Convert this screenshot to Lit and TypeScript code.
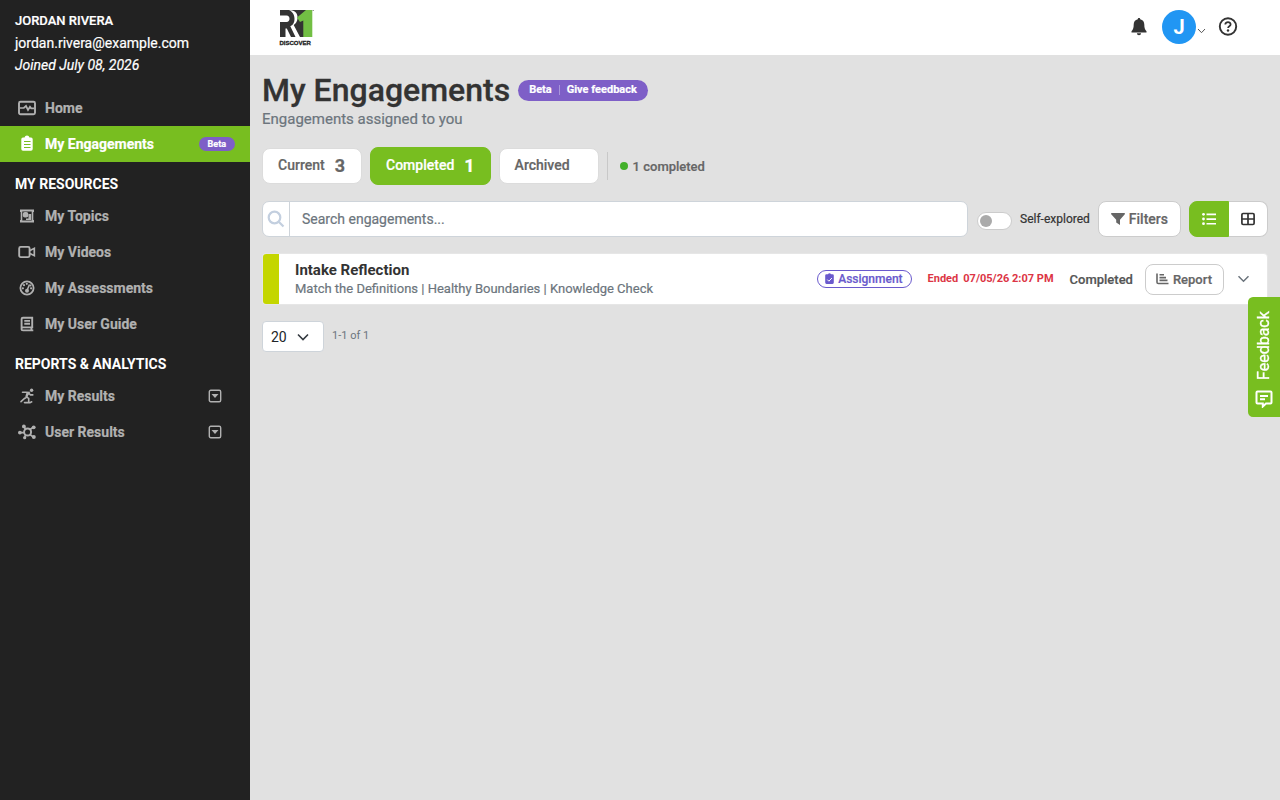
import { LitElement, html, css, svg } from "lit";
import { customElement, state } from "lit/decorators.js";

const icons = {
  home: svg`<rect x="1" y="2.800" width="16" height="12.400" rx="1.500" fill="none" stroke="currentColor" stroke-width="1.900"/><path d="M2 9h3.800l2.200-2 2 4 2-3.300 1.200 1.600h3" fill="none" stroke="currentColor" stroke-width="1.700"/>`,
  clipboard: svg`<path d="M6.500 2.500a2.600 2.600 0 0 1 5 0H13A1.700 1.700 0 0 1 14.700 4.200V14a1.700 1.700 0 0 1-1.700 1.700H5A1.700 1.700 0 0 1 3.300 14V4.200A1.700 1.700 0 0 1 5 2.500Z" fill="currentColor"/><path d="M6 6.500h6.500M6 9.500h6.500M6 12.500h6.500" stroke="#78be20" stroke-width="1.200"/>`,
  topics: svg`<path d="M2 2.500h14V5h-.7v8h.7v2.500H2V13h.7V5H2Z" fill="currentColor"/><path d="M4.300 4.500h9.400v9H4.300Z" fill="#222"/><path d="M10.500 7h2.700v6H8v-1.500h2.500Z" fill="currentColor"/><rect x="4.800" y="5" width="5.500" height="5.500" rx="2" fill="currentColor"/>`,
  video: svg`<rect x="1.200" y="3.900" width="10.400" height="10.200" rx="1.500" fill="none" stroke="currentColor" stroke-width="1.900"/><path d="m12 7.500 4.300-2.200v7.400L12 10.500" fill="none" stroke="currentColor" stroke-width="1.700"/>`,
  gauge: svg`<circle cx="9" cy="9" r="6.600" fill="none" stroke="currentColor" stroke-width="1.800"/><path d="m9.200 11 2.300-5.500" stroke="currentColor" stroke-width="1.600"/><circle cx="9" cy="11.800" r="2" fill="currentColor"/><g fill="currentColor"><circle cx="4.900" cy="9.300" r="1.100"/><circle cx="6" cy="6.200" r="1.100"/><circle cx="8.800" cy="4.800" r="1.100"/><circle cx="13.100" cy="9.300" r="1.100"/><circle cx="12.500" cy="6.400" r="1"/></g>`,
  book: svg`<path d="M15.200 12.400H5a1.500 1.500 0 0 0 0 3h10.300M3.600 14V4c0-.8.600-1.300 1.400-1.300h9.200v9.500m-.8.300v2.800M6.300 5.900h5.700M6.300 8.700h5.700" fill="none" stroke="currentColor" stroke-width="1.900"/>`,
  skate: svg`<circle cx="13.600" cy="3.300" r="1.700" fill="currentColor"/><path d="M4.500 5.200h3.300l3.200.3-2.600 4.300 2.300 1.600v3.200M7.800 10.800l-1.300.6-3.500 3.200M10.800 6.200l1.700 1.700h2.300M6.500 15.600h5.500l1.700-.8" fill="none" stroke="currentColor" stroke-width="1.600" stroke-linecap="round"/><path d="m8.500 5.500 2.500.4L9.300 10l-2-.5Z" fill="currentColor"/>`,
  nodes: svg`<circle cx="9.600" cy="9" r="3.500" fill="none" stroke="currentColor" stroke-width="1.900"/><path d="M7.600 6.300 6 3.800M12 6.500l3-2M12 11.500l3 2.300M7.700 11.500 6.800 14M6 9.600H1.500" stroke="currentColor" stroke-width="1.700"/><g fill="currentColor"><circle cx="5.900" cy="3.400" r="1.900"/><circle cx="15.700" cy="4.300" r="1.900"/><circle cx="15.800" cy="14" r="2"/><circle cx="6.700" cy="14.700" r="1.600"/><circle cx="1.900" cy="9.600" r="1.900"/></g>`,
};
type IconName = keyof typeof icons;
const icon = (name: IconName) => html`<svg class="nav-icon" viewBox="0 0 18 18" aria-hidden="true">${icons[name]}</svg>`;

interface NavItem { label: string; icon: IconName; active?: boolean; badge?: string; expandable?: boolean }
const groups: { title?: string; items: NavItem[] }[] = [
  { items: [{ label: "Home", icon: "home" }, { label: "My Engagements", icon: "clipboard", active: true, badge: "Beta" }] },
  { title: "MY RESOURCES", items: [
    { label: "My Topics", icon: "topics" },
    { label: "My Videos", icon: "video" },
    { label: "My Assessments", icon: "gauge" },
    { label: "My User Guide", icon: "book" },
  ] },
  { title: "REPORTS & ANALYTICS", items: [
    { label: "My Results", icon: "skate", expandable: true },
    { label: "User Results", icon: "nodes", expandable: true },
  ] },
];

@customElement("app-sidebar")
export class AppSidebar extends LitElement {
  static styles = css`
    :host { display: block; background: #222; color: #fff; font-size: 14px; }
    .user { padding: 10px 15px 0; line-height: 22px; -webkit-text-stroke: 0.2px; }
    .name { font-size: 13px; font-weight: 500; }
    .joined { font-style: italic; }
    .list { list-style: none; margin: 0; padding: 0; }
    .first { padding-top: 14px; }
    .link { display: flex; align-items: center; height: 36px; padding: 0 15px 0 18px; gap: 9px; color: #b1b1b1; font-weight: 700; text-decoration: none; -webkit-text-stroke: 0.2px; }
    .link.active { background: #78be20; color: #fff; }
    .nav-icon { width: 18px; height: 18px; flex: none; }
    .label { flex: 1; }
    .badge { background: #7e5fc7; color: #fff; border-radius: 7px; font-size: 9px; line-height: 14px; padding: 0 9px; }
    .title { margin: 0; padding: 12px 15px 4px; font-size: 14px; line-height: 20px; font-weight: 700; }
    .caret { width: 14px; height: 14px; margin-right: 13px; }
  `;
  render() {
    return html`
      <div class="user">
        <div class="name">JORDAN RIVERA</div>
        <div>jordan.rivera@example.com</div>
        <div class="joined">Joined July 08, 2026</div>
      </div>
      <nav>
        ${groups.map((g) => html`
          ${g.title ? html`<h2 class="title">${g.title}</h2>` : ""}
          <ul class="list ${g.title ? "" : "first"}">
            ${g.items.map((i) => html`<li><a class="link ${i.active ? "active" : ""}" href="#">
              ${icon(i.icon)}<span class="label">${i.label}</span>
              ${i.badge ? html`<span class="badge">${i.badge}</span>` : ""}
              ${i.expandable ? html`<svg class="caret" viewBox="0 0 14 14"><rect x="1.300" y="1.300" width="11.400" height="11.400" rx="1.500" fill="none" stroke="currentColor" stroke-width="1.400"/><path d="M3.500 5h7L7 9Z" fill="currentColor"/></svg>` : ""}
            </a></li>`)}
          </ul>`)}
      </nav>`;
  }
}

@customElement("app-topbar")
export class AppTopbar extends LitElement {
  static styles = css`
    :host { display: flex; align-items: center; justify-content: space-between; height: 55px; background: #fff; padding: 0 42px 0 28px; }
    .logo { width: 38px; height: 38px; display: block; }
    .actions { display: flex; align-items: center; padding-bottom: 2px; }
    .plain { border: 0; background: none; padding: 0; display: flex; align-items: center; color: #333; font-family: inherit; }
    .account { margin: 0 12px 0 14px; }
    .avatar { width: 34px; height: 34px; border-radius: 50%; background: #2196f3; color: #fff; font-size: 20px; line-height: 34px; font-weight: 700; text-align: center; }
    .chev { margin: 8px 0 0 1px; }
  `;
  render() {
    return html`
      <a href="#" aria-label="R1 Discover"><svg class="logo" viewBox="0 0 38 38">
        <path d="M2 1h26v27H2Z" fill="#333"/>
        <path d="M2 6.500h6.500c4 0 4 6.500 0 6.500H2ZM7.500 28v-8.500h1.300L13 28Z" fill="#fff"/>
        <path d="M11 1c6.500 0 9 4 8.500 8.500-.3 3-1.500 5-3.800 6.500L22 28h-4.500L12.300 17.300c3.200-1.500 4.200-4 4.200-7.300 0-4-1.500-7-5.500-9Z" fill="#fff"/>
        <path d="M19 8.500 28 1h6.300v27h-9V11.500L22 13Z" fill="#72bf44"/><path d="M34.500 1.500H36" stroke="#999"/>
        <text x="1.500" y="36" font-family="Liberation Sans" font-size="6" font-weight="700" fill="#222" stroke="#222" stroke-width=".3">DISCOVER</text>
      </svg></a>
      <div class="actions">
        <button class="plain" aria-label="Notifications"><svg width="18" height="20" viewBox="0 0 18 20"><path d="M9 1c.8 0 1.200.5 1.200 1.200 2.700.6 4.100 2.500 4.100 5.300 0 3.700.6 5 2.200 6.700V15.500h-15v-1.300C3.100 12.500 3.700 11.200 3.700 7.500c0-2.800 1.400-4.700 4.100-5.300C7.800 1.500 8.200 1 9 1ZM6.900 16.200h4.200a2.100 2.100 0 0 1-4.200 0Z" fill="currentColor"/></svg></button>
        <button class="plain account" aria-label="Account"><span class="avatar">J</span><svg class="chev" width="9" height="8" viewBox="0 0 9 8"><path d="m1 2 3.500 3.700L8 2" fill="none" stroke="#555"/></svg></button>
        <button class="plain" aria-label="Help"><svg width="20" height="20" viewBox="0 0 20 20"><circle cx="10" cy="9.500" r="8.200" fill="none" stroke="currentColor" stroke-width="1.900"/><path d="M7.300 7.600c0-3.300 5.500-3.200 5.300 0 0 1.700-2.500 1.800-2.500 3.400" fill="none" stroke="currentColor" stroke-width="1.800"/><circle cx="10" cy="13.500" r="1.200" fill="currentColor"/></svg></button>
      </div>`;
  }
}

@customElement("app-root")
export class AppRoot extends LitElement {
  @state() private tab = "Completed";
  @state() private view = "list";

  static styles = css`
    :host { display: grid; grid-template-columns: 250px minmax(0, 1fr); min-height: 100vh; background: #e1e1e1; font-family: Roboto, sans-serif; font-size: 14px; color: #333; }
    button, input, select { font-family: inherit; box-sizing: border-box; margin: 0; }
    .page { padding: 16px 12px; display: flex; flex-direction: column; }
    .heading { display: flex; align-items: center; gap: 8px; }
    h1 { margin: 0; font-size: 32px; line-height: 38px; font-weight: 500; -webkit-text-stroke: 0.3px; }
    .beta { display: flex; align-items: center; height: 21px; padding: 0 11px 2px; border: 0; border-radius: 11px; background: #7e5fc7; color: #fff; font-size: 11px; font-weight: 700; -webkit-text-stroke: 0.2px; }
    .beta-sep { width: 1px; height: 10px; background: #aa96dc; margin: 2px 7px 0 7px; }
    .sub { margin: 0; font-size: 15px; line-height: 20px; color: #6c757d; -webkit-text-stroke: 0.2px; }
    .tabs { display: flex; align-items: center; gap: 8px; margin-top: 18px; height: 38px; }
    .tab { display: flex; align-items: center; gap: 10px; height: 36px; min-width: 100px; padding: 0 15px 2px; border: 1px solid #dcdcdc; border-radius: 8px; background: #fff; color: #666; font-size: 14px; font-weight: 500; -webkit-text-stroke: 0.2px; }
    .tab.on { height: 38px; background: #78be20; border-color: #78be20; color: #fff; }
    .count { font-size: 18px; font-weight: 700; }
    .summary { display: flex; align-items: center; gap: 5px; height: 28px; padding-left: 12px; border-left: 1px solid #c8c8c8; color: #666; font-size: 13px; font-weight: 500; -webkit-text-stroke: 0.2px; }
    .dot { width: 8px; height: 8px; border-radius: 50%; background: #43b02a; }
    .tools { display: flex; align-items: center; gap: 8px; margin-top: 16px; }
    .search { flex: 1; display: flex; height: 36px; box-sizing: border-box; border: 1px solid #ced4da; border-radius: 7px; background: #fff; overflow: hidden; }
    .search-icon { width: 26px; display: flex; align-items: center; justify-content: center; border-right: 1px solid #ced4da; }
    .search-input { flex: 1; min-width: 0; border: 0; outline: 0; padding: 0 12px; font-size: 14px; background: transparent; }
    .search-input::placeholder { color: #6c757d; -webkit-text-stroke: 0.2px; }
    .toggle { display: flex; align-items: center; gap: 8px; font-size: 12px; color: #333; -webkit-text-stroke: 0.2px; }
    .switch { appearance: none; width: 35px; height: 18px; border: 1px solid #ccc; border-radius: 9px; background: #fff; display: flex; align-items: center; padding: 0 2px; margin: 3px 0 0 1px; }
    .switch::before { content: ""; width: 12px; height: 12px; border-radius: 50%; background: #aaa; }
    .filters, .report { display: flex; align-items: center; border: 1px solid #ccc; border-radius: 8px; background: #fff; color: #666; font-weight: 500; -webkit-text-stroke: 0.2px; }
    .filters { height: 36px; padding: 0 12px; gap: 4px; font-size: 14px; }
    .views { display: flex; height: 36px; }
    .view { width: 39px; display: flex; align-items: center; justify-content: center; padding: 0; border: 1px solid #ccc; background: #fff; color: #333; }
    .view:first-child { border-radius: 8px 0 0 8px; width: 40px; }
    .view:last-child { border-radius: 0 8px 8px 0; border-left: 0; }
    .view.on { background: #78be20; border-color: #78be20; color: #fff; }
    .row { display: flex; align-items: center; margin-top: 16px; background: #fff; border: 1px solid #e6e6e6; border-radius: 4px; overflow: hidden; min-height: 50px; }
    .stripe { width: 16px; align-self: stretch; background: #c4d600; }
    .what { flex: 1; padding-left: 16px; }
    .what-title { margin: 0; font-size: 15px; line-height: 20px; font-weight: 700; }
    .what-sub { margin: 0; font-size: 13px; line-height: 18px; color: #6c757d; -webkit-text-stroke: 0.2px; }
    .kind { display: flex; align-items: center; gap: 4px; height: 18px; box-sizing: border-box; border: 1px solid #6a5acd; border-radius: 9px; padding: 0 8px 0 7px; color: #6a5acd; font-size: 12px; font-weight: 500; -webkit-text-stroke: 0.2px; }
    .ended { display: flex; gap: 5px; margin-left: 16px; padding-bottom: 2px; color: #dc3545; font-size: 11px; font-weight: 700; }
    .status { margin-left: 16px; font-size: 13px; font-weight: 500; color: #555; -webkit-text-stroke: 0.2px; }
    .report { height: 31px; margin-left: 12px; padding: 0 11px 0 10px; gap: 4px; font-size: 13px; }
    .expand { display: flex; border: 0; padding: 0; background: none; margin: 0 17px 0 13px; color: #6c757d; }
    .pager { display: flex; align-items: center; gap: 8px; margin-top: 16px; font-size: 11px; color: #6c757d; }
    .range { padding-bottom: 2px; }
    .size-wrap { display: grid; align-items: center; }
    .size { grid-area: 1 / 1; appearance: none; height: 31px; width: 62px; border: 1px solid #ced4da; border-radius: 4px; background: #fff; padding: 0 8px; font-size: 14px; color: #212529; }
    .size-chev { grid-area: 1 / 1; justify-self: end; margin-right: 15px; pointer-events: none; }
    .feedback { position: fixed; right: 0; top: 297px; display: flex; align-items: center; gap: 10px; writing-mode: vertical-rl; transform: rotate(180deg); width: 32px; height: 120px; padding: 9px 0; border: 0; border-radius: 0 5px 5px 0; background: #78be20; color: #fff; font-size: 16px; -webkit-text-stroke: 0.3px; }
    .feedback-icon { transform: rotate(180deg); flex: none; }
  `;

  private tabButton(name: string, count?: number) {
    return html`<button class="tab ${this.tab === name ? "on" : ""}" @click=${() => (this.tab = name)}>${name}${count ? html`<span class="count">${count}</span>` : ""}</button>`;
  }

  render() {
    return html`
      <app-sidebar></app-sidebar>
      <div>
        <app-topbar></app-topbar>
        <main class="page">
          <div class="heading"><h1>My Engagements</h1><button class="beta">Beta<span class="beta-sep"></span>Give feedback</button></div>
          <p class="sub">Engagements assigned to you</p>
          <div class="tabs">
            ${this.tabButton("Current", 3)}${this.tabButton("Completed", 1)}${this.tabButton("Archived")}
            <div class="summary"><span class="dot"></span>1 completed</div>
          </div>
          <div class="tools">
            <div class="search">
              <label class="search-icon" for="q" aria-label="Search"><svg width="18" height="18" viewBox="0 0 18 18" fill="none" stroke="#c3cfdf" stroke-width="2.200"><circle cx="7.500" cy="7.500" r="5.800"/><path d="m12 12 4.500 4.500"/></svg></label>
              <input class="search-input" id="q" type="text" placeholder="Search engagements..." />
            </div>
            <label class="toggle"><input class="switch" type="checkbox" role="switch" />Self-explored</label>
            <button class="filters"><svg width="14" height="14" viewBox="0 0 14 14"><path d="M.8 1h12.400c.8 0 1 .8.600 1.300L9 7.800V13L5.200 10.500V7.800L.2 2.300C-.2 1.800 0 1 .8 1Z" fill="currentColor"/></svg>Filters</button>
            <div class="views">
              <button class="view ${this.view === "list" ? "on" : ""}" aria-label="List view" @click=${() => (this.view = "list")}><svg width="14" height="14" viewBox="0 0 14 14" fill="currentColor"><path d="M4.500 1.500H14v1.700H4.500zM4.500 6.200H14v1.700H4.500zM4.500 10.900H14v1.700H4.500z"/><circle cx="1.500" cy="2.300" r="1.400"/><circle cx="1.500" cy="7" r="1.400"/><circle cx="1.500" cy="11.700" r="1.400"/></svg></button>
              <button class="view ${this.view === "grid" ? "on" : ""}" aria-label="Grid view" @click=${() => (this.view = "grid")}><svg width="14" height="14" viewBox="0 0 14 14" fill="none" stroke="currentColor" stroke-width="1.700"><rect x=".9" y="1.500" width="12.200" height="11" rx="1.200"/><path d="M7 1.500v11M1 7h12"/></svg></button>
            </div>
          </div>
          <article class="row">
            <span class="stripe"></span>
            <div class="what"><h2 class="what-title">Intake Reflection</h2><p class="what-sub">Match the Definitions | Healthy Boundaries | Knowledge Check</p></div>
            <span class="kind"><svg width="9" height="12" viewBox="0 0 9 12"><path d="M3 1.300a1.600 1.600 0 0 1 3 0h1.500A1.300 1.300 0 0 1 8.800 2.600v7A1.300 1.300 0 0 1 7.500 10.900h-6A1.300 1.300 0 0 1 .2 9.600v-7A1.300 1.300 0 0 1 1.500 1.300Z" fill="currentColor"/><path d="m2.300 6.600 1.600 1.600 3-3.200" fill="none" stroke="#fff"/></svg>Assignment</span>
            <span class="ended"><span>Ended</span><span>07/05/26 2:07 PM</span></span>
            <span class="status">Completed</span>
            <button class="report"><svg width="13" height="12" viewBox="0 0 13 12" fill="none" stroke="currentColor" stroke-width="1.600"><path d="M1 .5v8.700c0 .9.500 1.300 1.300 1.300H12.500M3.500 1.800h4.500M3.500 4.600h6.500M3.500 7.400h8"/></svg>Report</button>
            <button class="expand" aria-label="Show details"><svg width="13" height="8" viewBox="0 0 13 8"><path d="m1.500 1.200 5 5 5-5" fill="none" stroke="currentColor" stroke-width="1.500"/></svg></button>
          </article>
          <div class="pager">
            <div class="size-wrap"><select class="size" aria-label="Rows per page"><option>20</option><option>50</option></select><svg class="size-chev" width="12" height="8" viewBox="0 0 12 8"><path d="m1 1.500 5 5 5-5" fill="none" stroke="#343a40" stroke-width="1.600"/></svg></div>
            <span class="range">1-1 of 1</span>
          </div>
        </main>
      </div>
      <button class="feedback"><svg class="feedback-icon" width="18" height="18" viewBox="0 0 18 18" fill="none" stroke="currentColor" stroke-width="2"><path d="M2.500 1.500h13c.6 0 1 .4 1 1v10c0 .6-.4 1-1 1h-4.500L7.800 16.500v-3H2.500c-.6 0-1-.4-1-1v-10c0-.6.400-1 1-1ZM5 6h8M5 9.300h5"/></svg>Feedback</button>`;
  }
}
